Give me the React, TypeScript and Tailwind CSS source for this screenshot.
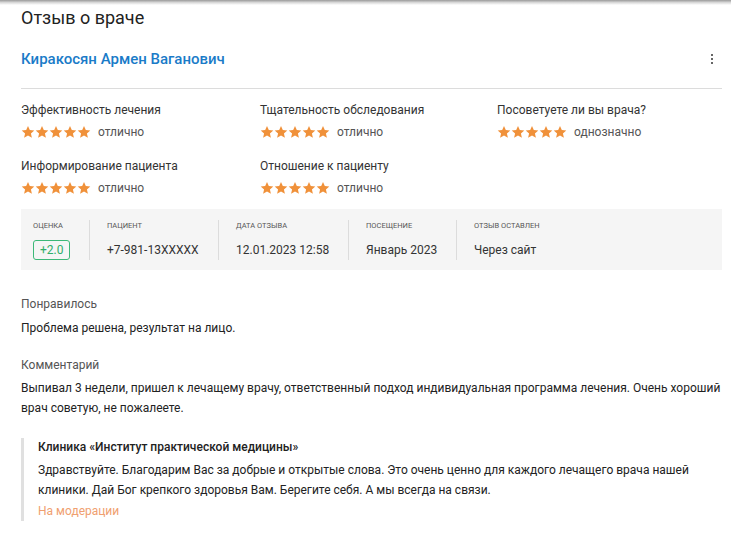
import React from 'react';

const ratings = [
  { label: 'Эффективность лечения', value: 'отлично' },
  { label: 'Тщательность обследования', value: 'отлично' },
  { label: 'Посоветуете ли вы врача?', value: 'однозначно' },
  { label: 'Информирование пациента', value: 'отлично' },
  { label: 'Отношение к пациенту', value: 'отлично' },
];

function Star() {
  return (
    <svg viewBox="0 0 24 24" className="w-[14px] h-[14px]" fill="#f0913a">
      <path d="M12 1.5l3.1 7.1 7.7.7-5.8 5.1 1.7 7.6L12 18l-6.7 4 1.7-7.6L1.2 9.3l7.7-.7z" />
    </svg>
  );
}

function Rating({ label, value }: { label: string; value: string }) {
  return (
    <div className="flex flex-col">
      <div className="text-[12px] leading-[20px] text-[#333]">{label}</div>
      <div className="flex items-center mt-[2px] h-[20px]">
        <div className="flex">
          {[0, 1, 2, 3, 4].map((i) => (
            <Star key={i} />
          ))}
        </div>
        <span className="ml-[7px] text-[12px] text-[#555]">{value}</span>
      </div>
    </div>
  );
}

function Info({ label, children, w, first }: { label: string; children: React.ReactNode; w: string; first?: boolean }) {
  return (
    <div className={`${w} flex items-stretch`}>
      <div className={first ? 'flex flex-col' : 'flex flex-col border-l border-[#dcdcdc] pl-[17px]'}>
        <div className="text-[7.5px] leading-[10px] uppercase text-[#555] pt-[1px]">{label}</div>
        <div className="mt-[9px] h-[20px] flex items-center text-[12px] text-[#333]">{children}</div>
      </div>
    </div>
  );
}

export default function App() {
  return (
    <div className="w-[731px] h-[536px] bg-white overflow-hidden" style={{ fontFamily: 'Roboto, "Liberation Sans", sans-serif' }}>
      <div className="h-[5px] bg-gradient-to-b from-[#9a9a9a] via-[#d8d8d8] to-white" />
      <div className="pl-[21px] pr-[9px]">
        <h1 className="text-[18px] leading-[24px] text-[#222] mt-[1px]">Отзыв о враче</h1>
        <div className="flex items-center justify-between mt-[17px] h-[24px]">
          <a className="text-[15px] font-medium text-[#1a7bc8]">Киракосян Армен Ваганович</a>
          <div className="flex flex-col gap-[2px] mr-[9px]">
            <span className="w-[2px] h-[2px] bg-[#666]" />
            <span className="w-[2px] h-[2px] bg-[#666]" />
            <span className="w-[2px] h-[2px] bg-[#666]" />
          </div>
        </div>
        <div className="h-px bg-[#dcdcdc] mt-[17px]" />

        <div className="grid grid-cols-[239px_237px_1fr] gap-y-[14px] mt-[11px]">
          {ratings.map((r) => (
            <Rating key={r.label} {...r} />
          ))}
        </div>

        <div className="bg-[#f5f5f5] h-[61px] mt-[11px] flex items-center pl-[12px]">
          <Info label="Оценка" w="w-[56px]" first>
            <span className="border border-[#3cb878] text-[#2fae6a] rounded-[3px] px-[6px] h-[20px] leading-[18px]">+2.0</span>
          </Info>
          <Info label="Пациент" w="w-[129px]">+7-981-13XXXXX</Info>
          <Info label="Дата отзыва" w="w-[130px]">12.01.2023 12:58</Info>
          <Info label="Посещение" w="w-[108px]">Январь 2023</Info>
          <Info label="Отзыв оставлен" w="w-[140px]">Через сайт</Info>
        </div>

        <div className="mt-[24px] text-[12px] leading-[20px] text-[#555]">Понравилось</div>
        <div className="mt-[4px] text-[12px] leading-[20px] text-[#222]">Проблема решена, результат на лицо.</div>

        <div className="mt-[17px] text-[12px] leading-[20px] text-[#555]">Комментарий</div>
        <div className="mt-[3px] text-[12px] leading-[20px] text-[#222]">
          Выпивал 3 недели, пришел к лечащему врачу, ответственный подход индивидуальная программа лечения. Очень хороший врач советую, не пожалеете.
        </div>

        <div className="mt-[20px] border-l-[3px] border-[#e0e0e0] pl-[14px]">
          <div className="text-[12px] leading-[18px] font-medium text-[#222]">Клиника «Институт практической медицины»</div>
          <div className="mt-[4px] text-[12px] leading-[20px] text-[#222]">
            Здравствуйте. Благодарим Вас за добрые и открытые слова. Это очень ценно для каждого лечащего врача нашей клиники. Дай Бог крепкого здоровья Вам. Берегите себя. А мы всегда на связи.
          </div>
          <div className="mt-[1px] text-[12px] leading-[20px] text-[#f0a070]">На модерации</div>
        </div>
      </div>
    </div>
  );
}
